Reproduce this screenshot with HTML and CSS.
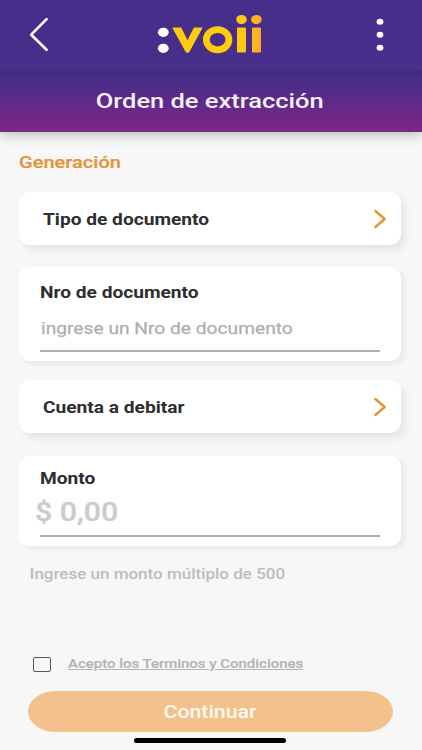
FILE: index.html
```html
<!DOCTYPE html>
<html lang="es">
<head>
<meta charset="utf-8">
<title>Orden de extracción</title>
<link rel="stylesheet" href="styles.css">
</head>
<body>
<div class="app">
  <header class="topbar">
    <svg class="back" width="20" height="36" viewBox="0 0 20 36" fill="none" stroke="#fff" stroke-width="2.6" stroke-linecap="round" stroke-linejoin="round"><path d="M17.6 2.2 2.2 17.7 17.6 32.8"/></svg>
    <svg class="logo" width="106" height="40" viewBox="0 0 106 40" role="img" aria-label="voii">
      <defs><linearGradient id="gold" x1="0" x2="1"><stop offset="0" stop-color="#fdba16"/><stop offset="1" stop-color="#fba92b"/></linearGradient></defs>
      <g fill="#fff"><ellipse cx="6.3" cy="17.3" rx="5.4" ry="4.6"/><ellipse cx="6.3" cy="33.3" rx="5.4" ry="4.6"/></g>
      <path fill="#ffcc0b" d="M16.3 12.4H24.2L30.5 25.2 36.9 12.4H44.6Q45.8 12.4 45.2 13.6L32.6 36.6Q30.5 39.2 28.4 36.6L15.7 13.6Q15.1 12.4 16.3 12.4Z"/>
      <ellipse cx="60.6" cy="24.7" rx="11.3" ry="10.1" fill="none" stroke="#ffcc0b" stroke-width="6.8"/>
      <g fill="#ffc90f"><ellipse cx="84.5" cy="4.6" rx="5.3" ry="4.6"/><rect x="80" y="12.4" width="9" height="25" rx="1"/></g>
      <g fill="url(#gold)"><ellipse cx="99.4" cy="4.6" rx="5.3" ry="4.6"/><rect x="95" y="12.4" width="9" height="25" rx="1"/></g>
    </svg>
    <svg class="more" width="8" height="34" viewBox="0 0 8 34" fill="#fff"><ellipse cx="4" cy="3.7" rx="3.4" ry="3"/><ellipse cx="4" cy="16.7" rx="3.4" ry="3"/><ellipse cx="4" cy="29.8" rx="3.4" ry="3"/></svg>
  </header>
  <div class="titlebar"><h1 class="wide title">Orden de extracción</h1></div>
  <main class="content">
    <h2 class="wide section">Generación</h2>
    <div class="card picker">
      <span class="wide label">Tipo de documento</span>
      <svg class="chevron" width="14" height="20" viewBox="0 0 14 20"><path d="M2.4 2 11.7 10 2.4 18"/></svg>
    </div>
    <div class="card field doc">
      <span class="wide label">Nro de documento</span>
      <div class="entry"><span class="wide hint">ingrese un Nro de documento</span></div>
    </div>
    <div class="card picker account">
      <span class="wide label">Cuenta a debitar</span>
      <svg class="chevron" width="14" height="20" viewBox="0 0 14 20"><path d="M2.4 2 11.7 10 2.4 18"/></svg>
    </div>
    <div class="card field amount">
      <span class="wide label">Monto</span>
      <div class="entry"><span class="wide value">$ 0,00</span></div>
    </div>
    <p class="wide note">Ingrese un monto múltiplo de 500</p>
  </main>
  <footer class="footer">
    <div class="terms"><span class="box"></span><a class="wide link">Acepto los Terminos y Condiciones</a></div>
    <div class="button"><span class="wide cta">Continuar</span></div>
    <div class="home"></div>
  </footer>
</div>
</body>
</html>
```
FILE: styles.css
```css
* { box-sizing: border-box; }
body { margin: 0; background: #f7f7f7; font-family: Roboto, sans-serif; color: #2e2e30; }
h1, h2, p { margin: 0; }
.app { width: 422px; height: 750px; display: flex; flex-direction: column; overflow: hidden; }

/* Lettering is extended horizontally */
.wide { display: inline-block; white-space: nowrap; transform: scaleX(1.18); transform-origin: left center; }

.topbar { height: 70px; flex: none; background: #482e8b; display: flex; justify-content: space-between; padding: 0 38px 0 29px; }
.back { margin-top: 17px; }
.logo { margin: 15px 0 0 -6px; }
.more { margin-top: 18px; }

.titlebar { height: 62px; flex: none; display: flex; justify-content: center; align-items: center; background: linear-gradient(#432a7c, #4a2d87 16%, #582b89 42%, #7a2788 92%, #7c2687); box-shadow: 0 2px 12px rgba(0,0,0,.28); clip-path: inset(0 0 -20px 0); }
.title { font-size: 21px; line-height: 26px; font-weight: 500; color: #f7f0fa; transform: translateX(-1.3px) scaleX(1.212); transform-origin: center; }

.content { padding: 20px 21px 0 19px; display: flex; flex-direction: column; align-items: stretch; }
.section { align-self: flex-start; font-size: 17px; line-height: 20px; font-weight: 500; color: #e2943a; -webkit-text-stroke: 0.2px #e2943a; }
.card { background: #fff; border-radius: 11px; box-shadow: 4px 5px 9px rgba(0,0,0,.08); }
.picker { height: 53px; margin-top: 20px; padding: 1px 14px 0 24px; display: flex; align-items: center; justify-content: space-between; }
.picker .label { padding-top: 2px; }
.chevron path { fill: none; stroke: #e5952f; stroke-width: 2.4; stroke-linecap: round; stroke-linejoin: round; }
.label { font-size: 16.5px; line-height: 20px; font-weight: 700; transform: scaleX(1.16); }
.field { padding: 16px 21px 0; display: flex; flex-direction: column; align-items: flex-start; box-shadow: 4px 3px 5px rgba(0,0,0,.06); }
.doc { height: 94px; margin-top: 22px; }
.entry { align-self: stretch; border-bottom: 2px solid #b0b0b0; }
.doc .entry { height: 49px; padding-top: 16px; }
.hint { font-size: 16.5px; line-height: 20px; color: #adaeb0; margin-left: 0.5px; transform: scaleX(1.163); -webkit-text-stroke: 0.25px #adaeb0; }
.account { margin-top: 19px; }
.amount { height: 90px; margin-top: 23px; padding-top: 13px; }
.amount .entry { height: 48px; padding-top: 8px; }
.value { font-size: 26px; line-height: 31px; font-weight: 500; color: #cbcbcb; margin-left: -5.5px; transform: scaleX(1.165); -webkit-text-stroke: 0.3px #cbcbcb; }
.note { align-self: flex-start; margin: 18px 0 0 11px; font-size: 15px; line-height: 20px; font-weight: 500; color: #bcbdbf; transform: translateX(-0.4px) scaleX(1.133); }

.footer { margin-top: auto; height: 96px; flex: none; padding: 0 29px 0 28px; }
.terms { height: 20px; display: flex; align-items: center; padding-left: 5px; }
.box { width: 18px; height: 15px; border: 1.5px solid #58585c; border-radius: 2px; margin-right: 17px; }
.link { font-size: 13px; line-height: 16px; font-weight: 500; color: #b4b5b7; text-decoration: underline; text-underline-offset: 1px; transform: scaleX(1.15); -webkit-text-stroke: 0.2px #b4b5b7; }
.button { margin-top: 17px; height: 41px; border-radius: 28px / 20.5px; background: #f3c28c; display: flex; align-items: center; justify-content: center; }
.cta { font-size: 19px; line-height: 24px; font-weight: 500; color: #fffaf2; transform: translateX(-0.5px) scaleX(1.12); transform-origin: center; }
.home { width: 152px; height: 5px; margin: 6px 0 0 106px; border-radius: 3px; background: #000; }
```
